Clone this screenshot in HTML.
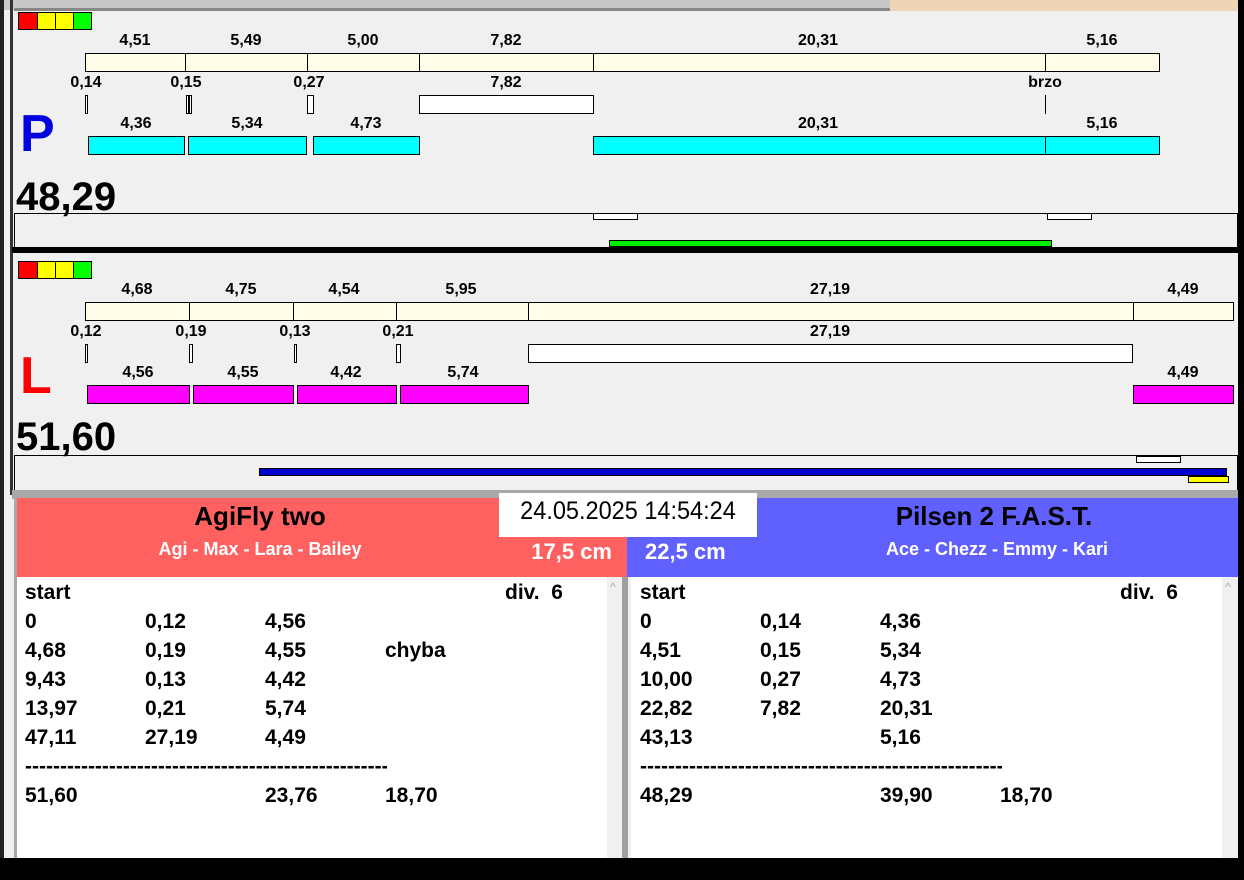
<!DOCTYPE html>
<html><head><meta charset="utf-8"><style>
*{margin:0;padding:0;box-sizing:border-box}
body{width:1244px;height:880px;position:relative;background:#f0f0f0;font-family:"Liberation Sans",Arial,sans-serif;font-weight:bold;overflow:hidden}
div{position:absolute}
.l{width:100px;text-align:center;font-size:16px;line-height:18px;color:#000}
.b{border:1px solid #000}
.y{background:#fffde8}
.w{background:#fff}
.c{background:#00ffff}
.m{background:#ff00ff}
.t{font-size:21px;line-height:24px;color:#000}
.d{width:362px;overflow:hidden;white-space:nowrap}
</style></head><body>
<div style="left:0;top:0;width:1244px;height:10px;background:#c8c8c8"></div>
<div style="left:890px;top:0;width:348px;height:11px;background:#f0d4b8"></div>
<div style="left:14px;top:8px;width:876px;height:3px;background:#888"></div>
<div style="left:0;top:0;width:4px;height:880px;background:#222"></div>
<div style="left:10px;top:0;width:3px;height:495px;background:#333"></div>
<div style="left:1238px;top:0;width:6px;height:880px;background:#000"></div>

<div style="left:18px;top:12px;width:20px;height:18px;background:#f00" class="b"></div>
<div style="left:37px;top:12px;width:19px;height:18px;background:#ff0" class="b"></div>
<div style="left:55px;top:12px;width:19px;height:18px;background:#ff0" class="b"></div>
<div style="left:73px;top:12px;width:19px;height:18px;background:#0f0" class="b"></div>

<div class="l" style="left:85px;top:32px">4,51</div>
<div class="l" style="left:196px;top:32px">5,49</div>
<div class="l" style="left:313px;top:32px">5,00</div>
<div class="l" style="left:456px;top:32px">7,82</div>
<div class="l" style="left:768px;top:32px">20,31</div>
<div class="l" style="left:1052px;top:32px">5,16</div>
<div class="b y" style="left:85px;top:53px;width:101px;height:19px"></div>
<div class="b y" style="left:185px;top:53px;width:123px;height:19px"></div>
<div class="b y" style="left:307px;top:53px;width:113px;height:19px"></div>
<div class="b y" style="left:419px;top:53px;width:175px;height:19px"></div>
<div class="b y" style="left:593px;top:53px;width:453px;height:19px"></div>
<div class="b y" style="left:1045px;top:53px;width:115px;height:19px"></div>

<div class="l" style="left:36px;top:74px">0,14</div>
<div class="l" style="left:136px;top:74px">0,15</div>
<div class="l" style="left:259px;top:74px">0,27</div>
<div class="l" style="left:456px;top:74px">7,82</div>
<div class="l" style="left:995px;top:74px">brzo</div>
<div class="b w" style="left:85px;top:95px;width:3px;height:19px"></div>
<div class="b w" style="left:186px;top:95px;width:3px;height:19px"></div>
<div class="b w" style="left:189px;top:95px;width:3px;height:19px"></div>
<div class="b w" style="left:307px;top:95px;width:7px;height:19px"></div>
<div class="b w" style="left:419px;top:95px;width:175px;height:19px"></div>
<div style="left:1045px;top:95px;width:1px;height:19px;background:#000"></div>

<div style="left:20px;top:104px;font-size:52px;line-height:60px;color:#0000e0">P</div>
<div class="l" style="left:86px;top:115px">4,36</div>
<div class="l" style="left:197px;top:115px">5,34</div>
<div class="l" style="left:316px;top:115px">4,73</div>
<div class="l" style="left:768px;top:115px">20,31</div>
<div class="l" style="left:1052px;top:115px">5,16</div>
<div class="b c" style="left:88px;top:136px;width:97px;height:19px"></div>
<div class="b c" style="left:188px;top:136px;width:119px;height:19px"></div>
<div class="b c" style="left:313px;top:136px;width:107px;height:19px"></div>
<div class="b c" style="left:593px;top:136px;width:453px;height:19px"></div>
<div class="b c" style="left:1045px;top:136px;width:115px;height:19px"></div>

<div style="left:16px;top:174px;font-size:40px;line-height:46px;color:#000">48,29</div>
<div style="left:14px;top:213px;width:1224px;height:36px;border:1px solid #000;border-bottom:none"></div>
<div class="b w" style="left:593px;top:213px;width:45px;height:7px"></div>
<div class="b w" style="left:1047px;top:213px;width:45px;height:7px"></div>
<div class="b" style="left:609px;top:240px;width:443px;height:7px;background:#00ee00"></div>
<div style="left:12px;top:247px;width:1226px;height:6px;background:#000"></div>

<div style="left:18px;top:261px;width:20px;height:18px;background:#f00" class="b"></div>
<div style="left:37px;top:261px;width:19px;height:18px;background:#ff0" class="b"></div>
<div style="left:55px;top:261px;width:19px;height:18px;background:#ff0" class="b"></div>
<div style="left:73px;top:261px;width:19px;height:18px;background:#0f0" class="b"></div>

<div class="l" style="left:87px;top:281px">4,68</div>
<div class="l" style="left:191px;top:281px">4,75</div>
<div class="l" style="left:294px;top:281px">4,54</div>
<div class="l" style="left:411px;top:281px">5,95</div>
<div class="l" style="left:780px;top:281px">27,19</div>
<div class="l" style="left:1133px;top:281px">4,49</div>
<div class="b y" style="left:85px;top:302px;width:105px;height:19px"></div>
<div class="b y" style="left:189px;top:302px;width:105px;height:19px"></div>
<div class="b y" style="left:293px;top:302px;width:104px;height:19px"></div>
<div class="b y" style="left:396px;top:302px;width:133px;height:19px"></div>
<div class="b y" style="left:528px;top:302px;width:606px;height:19px"></div>
<div class="b y" style="left:1133px;top:302px;width:101px;height:19px"></div>

<div class="l" style="left:36px;top:323px">0,12</div>
<div class="l" style="left:141px;top:323px">0,19</div>
<div class="l" style="left:245px;top:323px">0,13</div>
<div class="l" style="left:348px;top:323px">0,21</div>
<div class="l" style="left:780px;top:323px">27,19</div>
<div class="b w" style="left:85px;top:344px;width:3px;height:19px"></div>
<div class="b w" style="left:189px;top:344px;width:4px;height:19px"></div>
<div class="b w" style="left:294px;top:344px;width:3px;height:19px"></div>
<div class="b w" style="left:396px;top:344px;width:5px;height:19px"></div>
<div class="b w" style="left:528px;top:344px;width:605px;height:19px"></div>

<div style="left:20px;top:346px;font-size:52px;line-height:60px;color:#f00">L</div>
<div class="l" style="left:88px;top:364px">4,56</div>
<div class="l" style="left:193px;top:364px">4,55</div>
<div class="l" style="left:296px;top:364px">4,42</div>
<div class="l" style="left:413px;top:364px">5,74</div>
<div class="l" style="left:1133px;top:364px">4,49</div>
<div class="b m" style="left:87px;top:385px;width:103px;height:19px"></div>
<div class="b m" style="left:193px;top:385px;width:101px;height:19px"></div>
<div class="b m" style="left:297px;top:385px;width:100px;height:19px"></div>
<div class="b m" style="left:400px;top:385px;width:129px;height:19px"></div>
<div class="b m" style="left:1133px;top:385px;width:101px;height:19px"></div>

<div style="left:16px;top:414px;font-size:40px;line-height:46px;color:#000">51,60</div>
<div style="left:14px;top:455px;width:1224px;height:36px;border:1px solid #000;border-bottom:none"></div>
<div class="b w" style="left:1136px;top:456px;width:45px;height:7px"></div>
<div class="b" style="left:259px;top:468px;width:968px;height:8px;background:#0000d0"></div>
<div class="b" style="left:1188px;top:476px;width:41px;height:7px;background:#ff0"></div>

<div style="left:12px;top:490px;width:1226px;height:9px;background:#a8a8a8"></div>

<div style="left:14px;top:498px;width:613px;height:80px;background:#ff6060"></div>
<div style="left:627px;top:498px;width:611px;height:80px;background:#6060ff"></div>
<div style="left:14px;top:498px;width:3px;height:362px;background:#a8a8a8"></div>
<div style="left:499px;top:493px;width:258px;height:44px;background:#fff"></div>
<div style="left:499px;top:494px;width:258px;text-align:center;font-weight:normal;font-size:25px;line-height:34px;color:#000;transform:scaleX(0.94)">24.05.2025 14:54:24</div>
<div style="left:60px;top:500px;width:400px;text-align:center;font-size:26px;line-height:32px;color:#000">AgiFly two</div>
<div style="left:60px;top:537px;width:400px;text-align:center;font-size:18px;line-height:24px;color:#fff">Agi - Max - Lara - Bailey</div>
<div style="left:480px;top:538px;width:132px;text-align:right;font-size:22px;line-height:28px;color:#fff">17,5 cm</div>
<div style="left:645px;top:538px;width:200px;font-size:22px;line-height:28px;color:#fff">22,5 cm</div>
<div style="left:794px;top:500px;width:400px;text-align:center;font-size:26px;line-height:32px;color:#000">Pilsen 2 F.A.S.T.</div>
<div style="left:797px;top:537px;width:400px;text-align:center;font-size:18px;line-height:24px;color:#fff">Ace - Chezz - Emmy - Kari</div>

<div style="left:17px;top:577px;width:590px;height:281px;background:#fff"></div>
<div style="left:607px;top:577px;width:15px;height:281px;background:#f0f0f0"></div>
<div style="left:622px;top:577px;width:6px;height:281px;background:#a0a0a0"></div>
<div style="left:628px;top:577px;width:3px;height:281px;background:#f0f0f0"></div>
<div style="left:631px;top:577px;width:591px;height:281px;background:#fff"></div>
<div style="left:1222px;top:577px;width:16px;height:281px;background:#f0f0f0"></div>
<div style="left:610px;top:580px;font-size:12px;color:#aaa;font-weight:normal">^</div>
<div style="left:1225px;top:580px;font-size:12px;color:#aaa;font-weight:normal">^</div>
<div style="left:0;top:858px;width:1244px;height:22px;background:#000"></div>

<div class="t" style="left:25px;top:581px">start</div><div class="t" style="left:505px;top:581px">div.&nbsp; 6</div>
<div class="t" style="left:25px;top:610px">0</div><div class="t" style="left:145px;top:610px">0,12</div><div class="t" style="left:265px;top:610px">4,56</div>
<div class="t" style="left:25px;top:639px">4,68</div><div class="t" style="left:145px;top:639px">0,19</div><div class="t" style="left:265px;top:639px">4,55</div><div class="t" style="left:385px;top:639px">chyba</div>
<div class="t" style="left:25px;top:668px">9,43</div><div class="t" style="left:145px;top:668px">0,13</div><div class="t" style="left:265px;top:668px">4,42</div>
<div class="t" style="left:25px;top:697px">13,97</div><div class="t" style="left:145px;top:697px">0,21</div><div class="t" style="left:265px;top:697px">5,74</div>
<div class="t" style="left:25px;top:726px">47,11</div><div class="t" style="left:145px;top:726px">27,19</div><div class="t" style="left:265px;top:726px">4,49</div>
<div class="t d" style="left:25px;top:755px">------------------------------------------------------</div>
<div class="t" style="left:25px;top:784px">51,60</div><div class="t" style="left:265px;top:784px">23,76</div><div class="t" style="left:385px;top:784px">18,70</div>

<div class="t" style="left:640px;top:581px">start</div><div class="t" style="left:1120px;top:581px">div.&nbsp; 6</div>
<div class="t" style="left:640px;top:610px">0</div><div class="t" style="left:760px;top:610px">0,14</div><div class="t" style="left:880px;top:610px">4,36</div>
<div class="t" style="left:640px;top:639px">4,51</div><div class="t" style="left:760px;top:639px">0,15</div><div class="t" style="left:880px;top:639px">5,34</div>
<div class="t" style="left:640px;top:668px">10,00</div><div class="t" style="left:760px;top:668px">0,27</div><div class="t" style="left:880px;top:668px">4,73</div>
<div class="t" style="left:640px;top:697px">22,82</div><div class="t" style="left:760px;top:697px">7,82</div><div class="t" style="left:880px;top:697px">20,31</div>
<div class="t" style="left:640px;top:726px">43,13</div><div class="t" style="left:880px;top:726px">5,16</div>
<div class="t d" style="left:640px;top:755px">------------------------------------------------------</div>
<div class="t" style="left:640px;top:784px">48,29</div><div class="t" style="left:880px;top:784px">39,90</div><div class="t" style="left:1000px;top:784px">18,70</div>
</body></html>
